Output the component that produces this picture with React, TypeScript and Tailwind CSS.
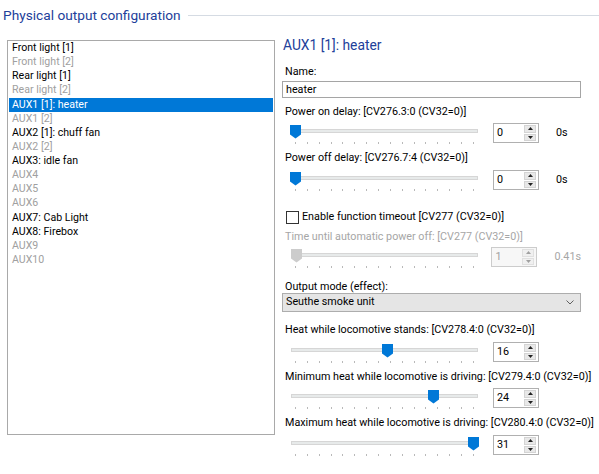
import React from "react";

const items: { label: string; active: boolean; selected?: boolean }[] = [
  { label: "Front light [1]", active: true },
  { label: "Front light [2]", active: false },
  { label: "Rear light [1]", active: true },
  { label: "Rear light [2]", active: false },
  { label: "AUX1 [1]: heater", active: true, selected: true },
  { label: "AUX1 [2]", active: false },
  { label: "AUX2 [1]: chuff fan", active: true },
  { label: "AUX2 [2]", active: false },
  { label: "AUX3: idle fan", active: true },
  { label: "AUX4", active: false },
  { label: "AUX5", active: false },
  { label: "AUX6", active: false },
  { label: "AUX7: Cab Light", active: true },
  { label: "AUX8: Firebox", active: true },
  { label: "AUX9", active: false },
  { label: "AUX10", active: false },
];

function Slider({ value, max, disabled }: { value: number; max: number; disabled?: boolean }) {
  const ticks = Array.from({ length: 16 });
  return (
    <div className="relative w-[201px] h-[22px]">
      {/* track */}
      <div className="absolute left-[9px] top-[6px] w-[187px] h-[4px] bg-[#e7eaea] border border-[#d6d6d6]" />
      {/* thumb */}
      <svg
        className="absolute top-[2px]"
        style={{ left: 8 + (value / max) * 178 }}
        width="11"
        height="14"
        viewBox="0 0 11 14"
      >
        <path d="M0 0H11V9.5L5.5 13.5L0 9.5Z" fill={disabled ? "#cccccc" : "#0078d7"} />
      </svg>
      {/* ticks */}
      <div className="absolute left-[13px] top-[19px] w-[179px] flex justify-between">
        {ticks.map((_, i) => (
          <div key={i} className="w-px h-[2px] bg-[#b9b9b9]" />
        ))}
      </div>
    </div>
  );
}

function Spin({ value, disabled }: { value: string; disabled?: boolean }) {
  return (
    <div
      className={`flex w-[46px] h-[20px] border ${
        disabled ? "border-[#cccccc] bg-[#f7f7f7] text-[#a0a0a0]" : "border-[#b0b0b0] bg-white text-black"
      }`}
    >
      <div className="flex-1 pl-[3px] leading-[18px]">{value}</div>
      <div className="flex flex-col w-[12px] mr-[2px] my-[1px] gap-px">
        {[0, 1].map((i) => (
          <div
            key={i}
            className={`flex-1 flex items-center justify-center border ${
              disabled ? "border-[#e0e0e0] bg-[#f0f0f0]" : "border-[#d4d4d4] bg-[#e8e8e8]"
            }`}
          >
            <svg width="5" height="3" viewBox="0 0 5 3">
              <path d={i === 0 ? "M0 3L2.5 0L5 3Z" : "M0 0L2.5 3L5 0Z"} fill={disabled ? "#a0a0a0" : "#222"} />
            </svg>
          </div>
        ))}
      </div>
    </div>
  );
}

function SliderBlock({
  label,
  value,
  max,
  spin,
  unit,
  disabled,
  labelMt,
  rowMt,
}: {
  label: string;
  value: number;
  max: number;
  spin: string;
  unit?: string;
  disabled?: boolean;
  labelMt: string;
  rowMt: string;
}) {
  return (
    <>
      <div
        className={`${labelMt} pl-[3px] leading-[14px] whitespace-nowrap ${
          disabled ? "text-[#a6a6a6]" : "text-black"
        }`}
      >
        {label}
      </div>
      <div className={`${rowMt} flex h-[20px]`}>
        <Slider value={value} max={max} disabled={disabled} />
        <div className="ml-[10px]">
          <Spin value={spin} disabled={disabled} />
        </div>
        {unit && (
          <div className={`ml-[17px] leading-[20px] ${disabled ? "text-[#a6a6a6]" : "text-black"}`}>{unit}</div>
        )}
      </div>
    </>
  );
}

export default function App() {
  return (
    <div className="w-[599px] h-[474px] bg-white overflow-hidden font-['Roboto',sans-serif] text-[10.75px] text-black">
      {/* Header */}
      <div className="h-[35px] pt-[5px] flex items-start">
        <div className="pl-[3px] text-[13.7px] leading-[20px] text-[#22409a] whitespace-nowrap">
          Physical output configuration
        </div>
        <div className="flex-1 ml-[7px] mt-[10px] h-px bg-[#d5dbe3]" />
      </div>

      <div className="flex">
        {/* List */}
        <div className="ml-[7px] mt-[5px] w-[268px] h-[395px] border border-[#a9a9a9] px-px text-[10.6px]">
          {items.map((it) => (
            <div
              key={it.label}
              className={`h-[14.13px] leading-[14.13px] pl-[3px] whitespace-nowrap ${
                it.selected ? "bg-[#0078d7] text-white" : it.active ? "text-black" : "text-[#a0a0a0]"
              }`}
            >
              {it.label}
            </div>
          ))}
        </div>

        {/* Details */}
        <div className="ml-[7px] w-[299px] flex flex-col">
          <div className="h-[20px] leading-[20px] pl-px text-[13.8px] text-[#22409a]">AUX1 [1]: heater</div>

          <div className="mt-[10px] pl-[3px] leading-[14px]">Name:</div>
          <div className="mt-[2px] h-[17px] border border-[#a5a5a5] pl-[3px] leading-[15px]">heater</div>

          <SliderBlock
            label="Power on delay: [CV276.3:0 (CV32=0)]"
            value={0}
            max={15}
            spin="0"
            unit="0s"
            labelMt="mt-[7px]"
            rowMt="mt-[4px]"
          />
          <SliderBlock
            label="Power off delay: [CV276.7:4 (CV32=0)]"
            value={0}
            max={15}
            spin="0"
            unit="0s"
            labelMt="mt-[8px]"
            rowMt="mt-[5px]"
          />

          <div className="mt-[20px] h-[14px] flex items-center pl-[4px]">
            <div className="w-[13px] h-[13px] border border-[#333333] bg-white" />
            <div className="ml-[3px] leading-[14px]">Enable function timeout [CV277 (CV32=0)]</div>
          </div>

          <SliderBlock
            label="Time until automatic power off: [CV277 (CV32=0)]"
            value={1}
            max={255}
            spin="1"
            unit="0.41s"
            disabled
            labelMt="mt-[6px]"
            rowMt="mt-[3px]"
          />

          <div className="mt-[14px] pl-[3px] leading-[12px]">Output mode (effect):</div>
          <div className="h-[19px] flex items-center border border-[#adadad] bg-[#e5e5e5] pl-[3px] pr-[6px]">
            <div className="flex-1">Seuthe smoke unit</div>
            <svg width="8" height="5" viewBox="0 0 8 5">
              <path d="M0.5 0.5L4 4L7.5 0.5" fill="none" stroke="#606060" strokeWidth="1" />
            </svg>
          </div>

          <SliderBlock
            label="Heat while locomotive stands: [CV278.4:0 (CV32=0)]"
            value={16}
            max={31}
            spin="16"
            labelMt="mt-[11px]"
            rowMt="mt-[5px]"
          />
          <SliderBlock
            label="Minimum heat while locomotive is driving: [CV279.4:0 (CV32=0)]"
            value={24}
            max={31}
            spin="24"
            labelMt="mt-[8px]"
            rowMt="mt-[4px]"
          />
          <SliderBlock
            label="Maximum heat while locomotive is driving: [CV280.4:0 (CV32=0)]"
            value={31}
            max={31}
            spin="31"
            labelMt="mt-[8px]"
            rowMt="mt-[5px]"
          />
        </div>
      </div>
    </div>
  );
}
